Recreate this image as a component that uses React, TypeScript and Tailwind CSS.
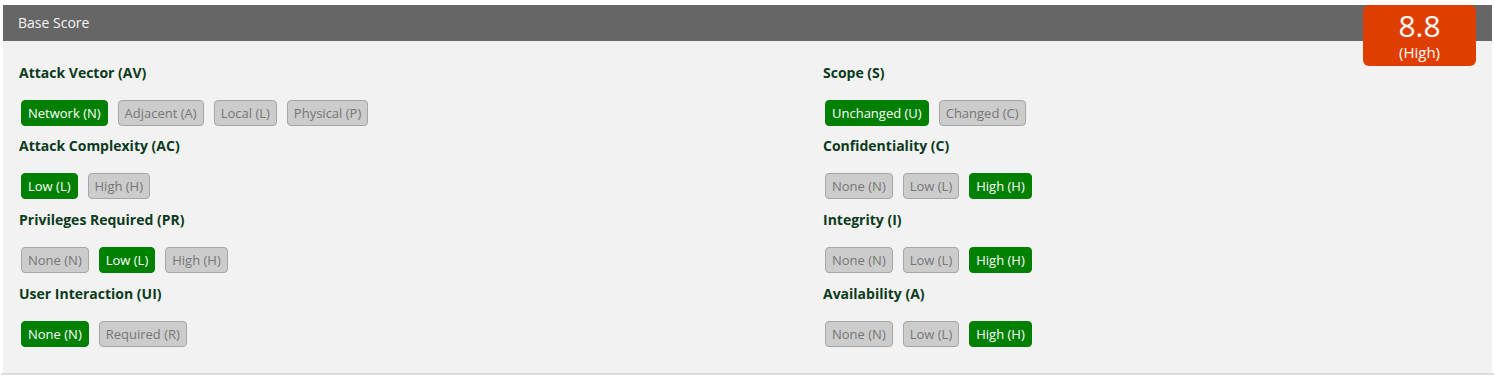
import React from "react";

type Metric = { label: string; options: string[]; selected: number };

const left: Metric[] = [
  { label: "Attack Vector (AV)", options: ["Network (N)", "Adjacent (A)", "Local (L)", "Physical (P)"], selected: 0 },
  { label: "Attack Complexity (AC)", options: ["Low (L)", "High (H)"], selected: 0 },
  { label: "Privileges Required (PR)", options: ["None (N)", "Low (L)", "High (H)"], selected: 1 },
  { label: "User Interaction (UI)", options: ["None (N)", "Required (R)"], selected: 0 },
];

const right: Metric[] = [
  { label: "Scope (S)", options: ["Unchanged (U)", "Changed (C)"], selected: 0 },
  { label: "Confidentiality (C)", options: ["None (N)", "Low (L)", "High (H)"], selected: 2 },
  { label: "Integrity (I)", options: ["None (N)", "Low (L)", "High (H)"], selected: 2 },
  { label: "Availability (A)", options: ["None (N)", "Low (L)", "High (H)"], selected: 2 },
];

function Group({ m, first }: { m: Metric; first: boolean }) {
  return (
    <div className={first ? "mb-[10px]" : "mb-[11px]"}>
      <div className="h-[20px] leading-[20px] text-[14px] font-bold text-[#0b3a1c]">{m.label}</div>
      <div className="mt-[17px] flex gap-[10px] pl-[2px]">
        {m.options.map((o, i) =>
          i === m.selected ? (
            <div
              key={o}
              className="h-[26px] leading-[24px] px-[6px] rounded-[4px] border border-[#008000] bg-[#008000] text-white text-[13px]"
            >
              {o}
            </div>
          ) : (
            <div
              key={o}
              className="h-[26px] leading-[24px] px-[6px] rounded-[4px] border border-[#a6a6a6] bg-[#cccccc] text-[#767676] text-[13px]"
            >
              {o}
            </div>
          )
        )}
      </div>
    </div>
  );
}

export default function App() {
  return (
    <div className="pt-[5px] bg-white" style={{ fontFamily: "'Open Sans', 'Noto Sans', sans-serif" }}>
      <div className="ml-[1px] mr-[1px] border-b-2 border-[#dddddd]">
        <div className="relative mx-[2px]">
          <div className="h-[36px] bg-[#666666] text-[#f4f4f4] text-[14px] leading-[36px] pl-[15px]">Base Score</div>
          <div className="bg-[#f2f2f2] pt-[22px] pb-[15px] pl-[16px] grid grid-cols-[804px_1fr]">
            <div>
              {left.map((m, i) => (
                <Group key={m.label} m={m} first={i === 0} />
              ))}
            </div>
            <div>
              {right.map((m, i) => (
                <Group key={m.label} m={m} first={i === 0} />
              ))}
            </div>
          </div>
          <div className="absolute top-0 right-[16px] w-[113px] h-[61px] rounded-[6px] bg-[#e03d00] text-white flex flex-col items-center">
            <div className="text-[30px] leading-[30px] mt-[6px]">8.8</div>
            <div className="text-[15px] leading-[17px] mt-[3px]">(High)</div>
          </div>
        </div>
      </div>
    </div>
  );
}
